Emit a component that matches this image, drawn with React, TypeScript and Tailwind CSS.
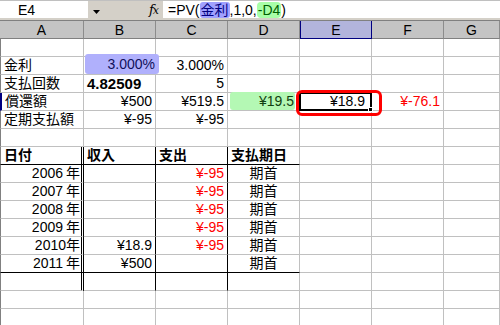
import type { ReactNode } from 'react';
import clsx from 'clsx';

const FONT = "font-['Liberation_Sans','Noto_Sans_CJK_JP',sans-serif]";

type CellProps = {
  children?: ReactNode;
  align?: 'left' | 'right' | 'center';
  rb?: boolean; // black right border
  rd?: boolean; // double right border
  bb?: boolean; // black bottom border
  bold?: boolean;
  red?: boolean;
  className?: string;
};

function Cell({ children, align = 'left', rb, rd, bb, bold, red, className }: CellProps) {
  return (
    <div
      className={clsx(
        'relative h-[18px] whitespace-nowrap px-[3px] text-[14px] leading-[17px]',
        rd ? 'border-r-[3px] border-double border-r-black' : rb ? 'border-r border-r-black' : 'border-r border-r-[#c0c0c0]',
        bb ? 'border-b border-b-black' : 'border-b border-b-[#c0c0c0]',
        align === 'right' && 'text-right',
        align === 'center' && 'text-center',
        bold && 'font-bold',
        red ? 'text-[#ff0000]' : 'text-black',
        className
      )}
    >
      {children}
    </div>
  );
}

function Empty({ n = 7 }: { n?: number }) {
  return (
    <>
      {Array.from({ length: n }).map((_, i) => (
        <Cell key={i} className={i === 0 ? 'border-l border-l-[#808080]' : ''} />
      ))}
    </>
  );
}

const years = [
  { y: '2006', inc: '', out: '¥-95' },
  { y: '2007', inc: '', out: '¥-95' },
  { y: '2008', inc: '', out: '¥-95' },
  { y: '2009', inc: '', out: '¥-95' },
  { y: '2010', inc: '¥18.9', out: '¥-95' },
  { y: '2011', inc: '¥500', out: '' },
];

export default function App() {
  const cols = ['A', 'B', 'C', 'D', 'E', 'F', 'G'];
  return (
    <div className={clsx('h-[325px] w-[500px] overflow-hidden bg-white', FONT)}>
      {/* formula bar */}
      <div className="flex h-[21px] border-t border-t-[#c0c0c0] border-b border-b-[#808080] bg-[#d4d0c8]">
        <div className="h-[17px] w-[88px] bg-white pl-[18px] text-[14px] leading-[18px]">E4</div>
        <div className="flex w-[75px] items-start">
          <svg width="8" height="5" viewBox="0 0 8 5" className="ml-[5px] mt-[9px]">
            <path d="M0 0 H7 L3.5 4 Z" fill="#000" />
          </svg>
          <span className="ml-[48px] font-['DejaVu_Serif',serif] text-[13px] italic leading-[18px] tracking-[-1px]">
            f<span className="text-[11px]">x</span>
          </span>
        </div>
        <div className="h-[17px] flex-1 whitespace-nowrap bg-white pl-[5px] text-[14px] leading-[18px]">
          =PV(<span className="rounded-[3px] bg-[#a0a0ff] px-[1px] text-[#000080]">金利</span>,1,0,
          <span className="rounded-[4px] bg-[#a8ffa8] px-[1px] text-[#006000]">-D4</span>)
        </div>
      </div>

      {/* column headers */}
      <div className="grid grid-cols-[84px_72px_72px_72px_72px_72px_56px]">
        {cols.map((c) => (
          <div
            key={c}
            className={clsx(
              'h-[18px] border-b text-center text-[14px] leading-[18px]',
              c === 'E'
                ? 'border-x border-x-[#000080] border-b-[#000080] bg-[#b2b4dc] text-black'
                : 'border-r border-r-[#8c8c8c] border-b-[#808080] bg-[#c4c4c4] text-black'
            )}
          >
            {c}
          </div>
        ))}
      </div>

      {/* sheet */}
      <div className="grid grid-cols-[84px_72px_72px_72px_72px_72px_56px]">
        <Empty />

        <Cell className="border-l border-l-[#808080]">金利</Cell>
        <Cell align="right">
          <div className="absolute -top-[3px] left-[1px] -right-[4px] bottom-0 rounded-[3px] bg-[#b0b0fc] px-[4px] text-right leading-[20px] text-[#10105a]">
            3.000%
          </div>
        </Cell>
        <Cell align="right">3.000%</Cell>
        <Cell />
        <Cell />
        <Cell />
        <Cell />

        <Cell className="border-l border-l-[#808080]">支払回数</Cell>
        <Cell bold className="text-[15px]">4.82509</Cell>
        <Cell align="right">5</Cell>
        <Cell />
        <Cell />
        <Cell />
        <Cell />

        <Cell className="border-l-2 border-l-[#000080]">償還額</Cell>
        <Cell align="right">¥500</Cell>
        <Cell align="right">¥519.5</Cell>
        <Cell align="right">
          <div className="absolute -top-[1px] left-[2px] right-[4px] bottom-0 rounded-[3px] bg-[#b4f8b4] pr-[1px] text-right leading-[18px] text-[#104010]">
            ¥19.5
          </div>
        </Cell>
        <Cell align="right" className="z-10">
          <div className="absolute -left-[1px] -top-[1px] -right-[1px] -bottom-[1px] border-2 border-black" />
          <div className="absolute -right-[2px] -bottom-[2px] h-[5px] w-[5px] border border-white bg-black" />
          <div className="absolute -left-[4px] -top-[3px] h-[26px] w-[86px] rounded-[6px] border-[3px] border-[#ff0000]" />
          <span className="relative pr-[3px]">¥18.9</span>
        </Cell>
        <Cell align="right" red>¥-76.1</Cell>
        <Cell />

        <Cell className="border-l border-l-[#808080]">定期支払額</Cell>
        <Cell align="right">¥-95</Cell>
        <Cell align="right">¥-95</Cell>
        <Cell />
        <Cell />
        <Cell />
        <Cell />

        <Empty />

        <Cell rd bb bold className="border-l border-l-[#808080]">日付</Cell>
        <Cell rb bb bold>収入</Cell>
        <Cell rb bb bold>支出</Cell>
        <Cell bb bold className="px-[2px]">支払期日</Cell>
        <Cell />
        <Cell />
        <Cell />

        {years.map((r, i) => {
          const last = i === years.length - 1;
          return (
            <div key={r.y} className="contents">
              <Cell rd bb={last} align="right" className="border-l border-l-[#808080] pr-[1px]">
                {r.y}
                {r.y !== '2010' && <span className="ml-[3px]" />}年
              </Cell>
              <Cell rb bb={last} align="right">{r.inc}</Cell>
              <Cell rb bb={last} align="right" red>{r.out}</Cell>
              <Cell bb={last} align="center">期首</Cell>
              <Cell />
              <Cell />
              <Cell />
            </div>
          );
        })}

        <Cell rd className="border-l border-l-[#808080]" />
        <Cell rb />
        <Cell rb />
        <Cell />
        <Cell />
        <Cell />
        <Cell />

        <Empty />
        <Empty />
      </div>
    </div>
  );
}
